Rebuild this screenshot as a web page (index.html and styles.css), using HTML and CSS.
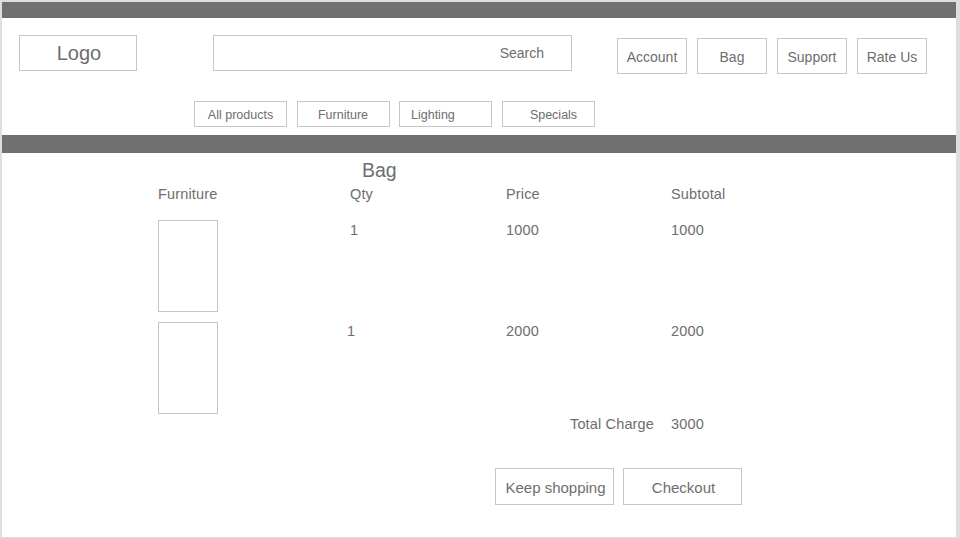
FILE: index.html
```html
<!DOCTYPE html>
<html lang="en">
<head>
<meta charset="utf-8">
<title>Bag</title>
<link rel="stylesheet" href="styles.css">
</head>
<body>
<div class="frame">
  <div class="bar"></div>
  <header class="header">
    <div class="top-row">
      <div class="logo">Logo</div>
      <div class="search"><span>Search</span></div>
      <div class="actions">
        <div class="btn">Account</div>
        <div class="btn">Bag</div>
        <div class="btn">Support</div>
        <div class="btn">Rate Us</div>
      </div>
    </div>
    <nav class="nav">
      <div class="nav-btn">All products</div>
      <div class="nav-btn">Furniture</div>
      <div class="nav-btn nav-left">Lighting</div>
      <div class="nav-btn nav-right">Specials</div>
    </nav>
  </header>
  <div class="bar bar2"></div>
  <main class="bag">
    <h1 class="title">Bag</h1>
    <div class="table">
      <div class="th">Furniture</div>
      <div class="th">Qty</div>
      <div class="th">Price</div>
      <div class="th">Subtotal</div>

      <div class="thumb row1"></div>
      <div class="td row1">1</div>
      <div class="td row1">1000</div>
      <div class="td row1">1000</div>

      <div class="thumb row2"></div>
      <div class="td row2 shift">1</div>
      <div class="td row2">2000</div>
      <div class="td row2">2000</div>

      <div class="total-label">Total Charge</div>
      <div class="total-value">3000</div>
    </div>
    <div class="buttons">
      <div class="big-btn">Keep shopping</div>
      <div class="big-btn">Checkout</div>
    </div>
  </main>
</div>
</body>
</html>
```

FILE: styles.css
```css
* { box-sizing: border-box; }
html, body {
  margin: 0;
  padding: 0;
  background: #dedede;
  font-family: "Liberation Sans", Arial, sans-serif;
  color: #6e6e6e;
}
.frame {
  margin: 2px 4px 0 2px;
  height: 535px;
  background: #fff;
  overflow: hidden;
}
.bar {
  height: 16px;
  background: #707070;
}
.bar2 {
  height: 18px;
  margin-top: 8px;
}
.top-row {
  display: flex;
  align-items: flex-start;
  padding: 17px 0 0 17px;
}
.logo {
  width: 118px;
  height: 36px;
  border: 1px solid #c6c6c6;
  display: flex;
  align-items: center;
  justify-content: center;
  padding-left: 2px;
  font-size: 20px;
}
.search {
  width: 359px;
  height: 36px;
  margin-left: 76px;
  border: 1px solid #c6c6c6;
  display: flex;
  align-items: center;
  justify-content: flex-end;
  padding-right: 27px;
  font-size: 14px;
}
.actions {
  display: flex;
  gap: 10px;
  margin-left: 45px;
  margin-top: 3px;
}
.btn {
  width: 70px;
  height: 36px;
  border: 1px solid #c6c6c6;
  display: flex;
  align-items: center;
  justify-content: center;
  padding-top: 2px;
  font-size: 14px;
}
.nav {
  display: flex;
  gap: 9.5px;
  margin-top: 27px;
  padding-left: 192px;
}
.nav-btn {
  width: 93px;
  height: 26px;
  border: 1px solid #c6c6c6;
  display: flex;
  align-items: center;
  justify-content: center;
  padding-top: 1px;
  font-size: 12.5px;
}
.nav-left {
  justify-content: flex-start;
  padding-left: 11px;
}
.nav-right {
  padding-left: 11px;
}
.bag {
  padding-left: 156px;
}
.title {
  margin: 6px 0 0 204px;
  font-size: 19.5px;
  font-weight: normal;
  line-height: 22px;
}
.table {
  display: grid;
  grid-template-columns: 192px 156px 165px 120px;
  grid-template-rows: 16px 110px 102px 16px;
  margin-top: 5px;
  font-size: 14.5px;
  letter-spacing: 0.15px;
  line-height: 16px;
}
.th { white-space: nowrap; }
.thumb {
  width: 60px;
  height: 92px;
  border: 1px solid #c6c6c6;
  align-self: start;
}
.thumb.row1 { margin-top: 18px; }
.thumb.row2 { margin-top: 10px; }
.td.row1 { margin-top: 18px; padding-top: 2px; }
.td.row2 { margin-top: 10px; padding-top: 1px; }
.shift { margin-left: -3px; }
.total-label {
  grid-column: 3;
  justify-self: end;
  margin-right: 17px;
  margin-top: 2px;
  white-space: nowrap;
}
.total-value {
  grid-column: 4;
  margin-top: 2px;
}
.buttons {
  display: flex;
  gap: 9px;
  margin: 38px 0 0 337px;
}
.big-btn {
  width: 119px;
  height: 37px;
  border: 1px solid #c6c6c6;
  display: flex;
  align-items: center;
  justify-content: center;
  padding-left: 2px;
  padding-top: 1px;
  font-size: 15px;
}
```
